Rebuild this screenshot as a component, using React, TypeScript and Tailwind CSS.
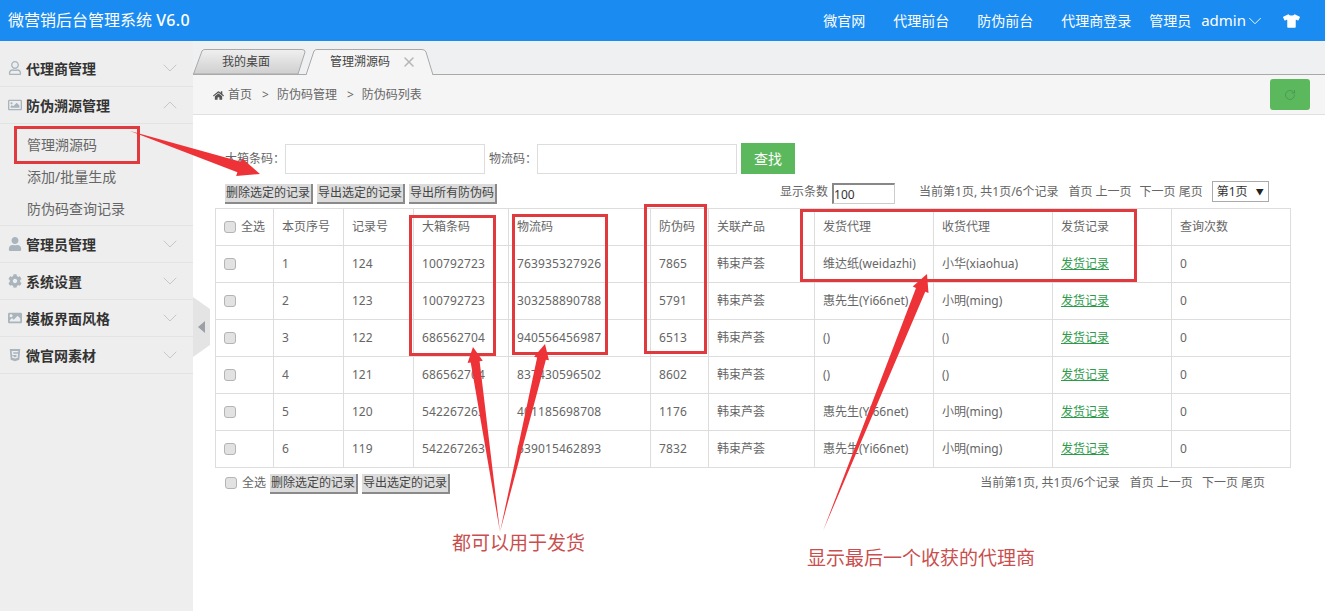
import { ChevronDown, ChevronUp, RotateCw, X } from 'lucide-react';
import { FaCog, FaHome, FaHtml5, FaRegImage, FaRegUser, FaTshirt, FaUser, FaImage } from 'react-icons/fa';

const sideIcon = 'w-[14px] h-[14px] text-[#a9b4bd] shrink-0';

const rows = [
  { no: 1, id: 124, box: '100792723', wl: '763935327926', fw: '7865', from: '维达纸(weidazhi)', to: '小华(xiaohua)' },
  { no: 2, id: 123, box: '100792723', wl: '303258890788', fw: '5791', from: '惠先生(Yi66net)', to: '小明(ming)' },
  { no: 3, id: 122, box: '686562704', wl: '940556456987', fw: '6513', from: '()', to: '()' },
  { no: 4, id: 121, box: '686562704', wl: '837430596502', fw: '8602', from: '()', to: '()' },
  { no: 5, id: 120, box: '542267263', wl: '401185698708', fw: '1176', from: '惠先生(Yi66net)', to: '小明(ming)' },
  { no: 6, id: 119, box: '542267263', wl: '639015462893', fw: '7832', from: '惠先生(Yi66net)', to: '小明(ming)' },
];

const colWidths = [58, 70, 70, 95, 142, 58, 106, 119, 119, 119, 119];

function Check() {
  return <span className="block w-3 h-3 rounded-[3px] border border-[#b4b4b4] bg-[#e2e2e2]" />;
}

function OldButton({ children }: { children: string }) {
  return (
    <button className="h-[20px] px-[1px] bg-[#dcdcdc] border-r-2 border-b-2 border-[#8a8a8a] text-[12px] leading-[18px] text-[#444] whitespace-nowrap">
      {children}
    </button>
  );
}

function SideRow({ icon, label, open }: { icon: React.ReactNode; label: string; open?: boolean }) {
  return (
    <div className="h-[37px] flex items-center pl-2 pr-[11px] border-b border-[#e3e3e3]">
      {icon}
      <span className="ml-1 flex-1 text-[14px] font-bold text-[#333]">{label}</span>
      {open ? (
        <ChevronUp className="w-6 h-6 text-[#bdbdbd]" strokeWidth={0.8} />
      ) : (
        <ChevronDown className="w-6 h-6 text-[#bdbdbd]" strokeWidth={0.8} />
      )}
    </div>
  );
}

// tapered annotation arrow, thin at the tail
function arrowPoints(x1: number, y1: number, x2: number, y2: number, w: number, head: number) {
  const len = Math.hypot(x2 - x1, y2 - y1);
  const ux = (x2 - x1) / len;
  const uy = (y2 - y1) / len;
  const nx = -uy;
  const ny = ux;
  const bx = x2 - ux * head;
  const by = y2 - uy * head;
  const pts = [
    [x1, y1],
    [bx + (nx * w) / 2, by + (ny * w) / 2],
    [bx + nx * w * 0.85, by + ny * w * 0.85],
    [x2, y2],
    [bx - nx * w * 0.85, by - ny * w * 0.85],
    [bx - (nx * w) / 2, by - (ny * w) / 2],
  ];
  return pts.map((p) => p.join(',')).join(' ');
}

function Annotations() {
  return (
    <div className="absolute inset-0 pointer-events-none">
      <svg width="1325" height="611" className="absolute left-0 top-0">
        <g fill="none" stroke="#e0393e" strokeWidth="3">
          <rect x="15.5" y="127.5" width="123" height="35" />
          <rect x="410.5" y="216.5" width="84" height="138" />
          <rect x="513.5" y="215.5" width="93" height="138" />
          <rect x="645.5" y="205.5" width="60" height="147" />
          <rect x="801.5" y="210.5" width="334" height="70" />
        </g>
        <g fill="#ee3338">
          <polygon points={arrowPoints(130, 131, 260, 174, 11, 22)} />
          <polygon points={arrowPoints(500, 532, 473, 347, 9, 15)} />
          <polygon points={arrowPoints(500, 532, 545, 344, 9, 15)} />
          <polygon points={arrowPoints(823, 531, 927, 274, 10, 17)} />
        </g>
      </svg>
      <div className="absolute left-[452px] top-[530px] text-[19px] leading-[26px] text-[#c94f4f]">都可以用于发货</div>
      <div className="absolute left-[807px] top-[545px] text-[19px] leading-[26px] text-[#c94f4f]">显示最后一个收获的代理商</div>
    </div>
  );
}

export default function App() {
  return (
    <div className="relative w-[1325px] h-[611px] overflow-hidden bg-white flex flex-col text-[12px] text-[#666] font-['Noto_Sans','Noto_Sans_CJK_SC',sans-serif]">
      {/* Top bar */}
      <header className="h-[41px] shrink-0 bg-[#1a8bf0] flex items-center pl-2 pr-[25px] text-white">
        <div className="text-[16px] flex-1 whitespace-nowrap -mt-px">
          微营销后台管理系统 <span className="font-medium tracking-[0.3px]">V6.0</span>
        </div>
        <nav className="flex items-center text-[14px] whitespace-nowrap">
          <span>微官网</span>
          <span className="ml-7">代理前台</span>
          <span className="ml-7">防伪前台</span>
          <span className="ml-7">代理商登录</span>
          <span className="ml-[18px]">管理员</span>
          <span className="ml-[10px] flex items-center text-[15px]">
            admin
            <ChevronDown className="-ml-[2px] w-[22px] h-[22px]" strokeWidth={1} />
          </span>
          <FaTshirt className="ml-[17px] w-[17px] h-[14px]" />
        </nav>
      </header>

      <div className="flex-1 flex min-h-0">
        {/* Sidebar */}
        <aside className="w-[193px] shrink-0 bg-[#eeeeee] pt-[9px]">
          <SideRow icon={<FaRegUser className={sideIcon} />} label="代理商管理" />
          <SideRow icon={<FaRegImage className={sideIcon} />} label="防伪溯源管理" open />
          <div className="pt-[5px] border-b border-[#e3e3e3] text-[14px] text-[#666]">
            <div className="h-8 leading-8 pl-[27px]">管理溯源码</div>
            <div className="h-8 leading-8 pl-[27px]">添加/批量生成</div>
            <div className="h-8 leading-8 pl-[27px]">防伪码查询记录</div>
          </div>
          <SideRow icon={<FaUser className={sideIcon} />} label="管理员管理" />
          <SideRow icon={<FaCog className={sideIcon} />} label="系统设置" />
          <SideRow icon={<FaImage className={sideIcon} />} label="模板界面风格" />
          <SideRow icon={<FaHtml5 className={sideIcon} />} label="微官网素材" />
        </aside>

        <main className="relative flex-1 min-w-0 flex flex-col">
          {/* Tabs */}
          <div className="h-[34px] shrink-0 bg-[#eef0f2] border-b border-[#a9a9a9] flex items-end pt-2">
            <div className="relative w-[113px] h-[25px] flex items-center pl-[29px] text-[#444]">
              <svg width="116" height="26" className="absolute left-0 top-0">
                <defs>
                  <linearGradient id="t1" x1="0" y1="0" x2="0" y2="1">
                    <stop offset="0" stopColor="#f0f0f0" />
                    <stop offset="1" stopColor="#cfcfcf" />
                  </linearGradient>
                </defs>
                <path d="M0.5 25 L9 2 Q10 0.5 12 0.5 L109 0.5 Q112 0.5 112 3 L105 25 Z" fill="url(#t1)" stroke="#a9a9a9" />
              </svg>
              <span className="relative">我的桌面</span>
            </div>
            <div className="relative w-[126px] h-[25px] flex items-center pl-[24px] text-[#444]">
              <svg width="128" height="26" className="absolute left-0 top-0">
                <path d="M0 26 L8 2 Q9 0.5 11 0.5 L116 0.5 Q119 0.5 120 3 L127 26" fill="#f5f5f5" stroke="#a9a9a9" />
              </svg>
              <span className="relative">管理溯源码</span>
              <X className="relative ml-[11px] w-4 h-4 text-[#b5b5b5]" strokeWidth={2.2} />
            </div>
          </div>

          {/* Breadcrumb */}
          <div className="h-[40px] shrink-0 bg-[#f5f5f5] border-b border-[#e0e0e0] flex items-center pl-5 pr-[15px] text-[12px] text-[#666]">
            <FaHome className="w-[11px] h-[11px] text-[#555] mt-px" />
            <span className="ml-1 mt-px">首页</span>
            <span className="ml-[10px] mt-px">&gt;</span>
            <span className="ml-2 mt-px">防伪码管理</span>
            <span className="ml-[10px] mt-px">&gt;</span>
            <span className="ml-2 mt-px">防伪码列表</span>
            <div className="ml-auto w-10 h-[31px] rounded-[3px] bg-[#5cb85c] flex items-center justify-center">
              <RotateCw className="w-3 h-3 text-[#4a8f55]" strokeWidth={1.5} />
            </div>
          </div>

          {/* Search */}
          <div className="pl-[32px] pr-[34px] pt-7">
            <div className="flex items-center h-[31px]">
              <span className="w-[60px]">大箱条码：</span>
              <div className="w-[200px] h-[30px] border border-[#ddd]" />
              <span className="ml-1 w-[48px]">物流码：</span>
              <div className="w-[200px] h-[30px] border border-[#ddd]" />
              <div className="ml-1 w-[54px] h-[31px] -mt-px bg-[#5cb85c] text-white text-[14px] flex items-center justify-center">查找</div>
            </div>
            <div className="flex items-center h-[25px] mt-[5px] whitespace-nowrap">
              <div className="flex gap-1 self-end">
                <OldButton>删除选定的记录</OldButton>
                <OldButton>导出选定的记录</OldButton>
                <OldButton>导出所有防伪码</OldButton>
              </div>
              <span className="ml-[283px]">显示条数</span>
              <div className="ml-1 w-[63px] h-[21px] self-end border border-[#ccc] border-t-[#888] border-l-[#888] border-t-2 border-l-2 text-[#333] leading-[19px]">100</div>
              <span className="ml-6">当前第1页, 共1页/6个记录</span>
              <span className="ml-[10px]">首页 上一页</span>
              <span className="ml-2">下一页 尾页</span>
              <div className="ml-[9px] w-[57px] h-[21px] border border-[#aaa] flex items-center justify-between px-1 text-[#333]">
                第1页<span className="text-[8px] text-[#222]">▼</span>
              </div>
            </div>
          </div>

          {/* Table */}
          <div className="pl-[22px] pr-[34px] mt-1">
            <table className="table-fixed border-collapse w-[1075px]">
              <colgroup>
                {colWidths.map((w, i) => (
                  <col key={i} style={{ width: w }} />
                ))}
              </colgroup>
              <thead>
                <tr className="h-[37px]">
                  <th className="border border-[#ddd] pl-2 font-normal text-left">
                    <span className="flex items-center gap-[5px]">
                      <Check />
                      全选
                    </span>
                  </th>
                  {['本页序号', '记录号', '大箱条码', '物流码', '防伪码', '关联产品', '发货代理', '收货代理', '发货记录', '查询次数'].map((h) => (
                    <th key={h} className="border border-[#ddd] pl-2 font-normal text-left">
                      {h}
                    </th>
                  ))}
                </tr>
              </thead>
              <tbody>
                {rows.map((r) => (
                  <tr key={r.no} className="h-[37px]">
                    <td className="border border-[#ddd] pl-2">
                      <Check />
                    </td>
                    <td className="border border-[#ddd] pl-2">{r.no}</td>
                    <td className="border border-[#ddd] pl-2">{r.id}</td>
                    <td className="border border-[#ddd] pl-2 tracking-[0.15px]">{r.box}</td>
                    <td className="border border-[#ddd] pl-2 tracking-[0.15px]">{r.wl}</td>
                    <td className="border border-[#ddd] pl-2 tracking-[0.15px]">{r.fw}</td>
                    <td className="border border-[#ddd] pl-2">韩束芦荟</td>
                    <td className="border border-[#ddd] pl-2">{r.from}</td>
                    <td className="border border-[#ddd] pl-2">{r.to}</td>
                    <td className="border border-[#ddd] pl-2 text-[#2d9b4a] underline">发货记录</td>
                    <td className="border border-[#ddd] pl-2">0</td>
                  </tr>
                ))}
              </tbody>
            </table>
          </div>

          {/* Footer row */}
          <div className="flex items-center h-[22px] mt-1 pl-[32px] pr-[60px] whitespace-nowrap">
            <span className="-mt-px">
              <Check />
            </span>
            <span className="ml-[5px] -mt-px">全选</span>
            <div className="ml-1 mt-[2px] flex gap-1">
              <OldButton>删除选定的记录</OldButton>
              <OldButton>导出选定的记录</OldButton>
            </div>
            <span className="ml-auto">当前第1页, 共1页/6个记录</span>
            <span className="ml-[10px]">首页 上一页</span>
            <span className="ml-[9px]">下一页 尾页</span>
          </div>

          {/* Collapse handle */}
          <div className="absolute left-0 top-[256px] w-[17px] h-[60px] bg-[#e4e4e4] [clip-path:polygon(0_0,100%_20%,100%_80%,0_100%)] flex items-center justify-center">
            <span className="w-0 h-0 border-y-[6px] border-y-transparent border-r-[7px] border-r-[#9aa0a6]" />
          </div>
        </main>
      </div>

      <Annotations />
    </div>
  );
}
